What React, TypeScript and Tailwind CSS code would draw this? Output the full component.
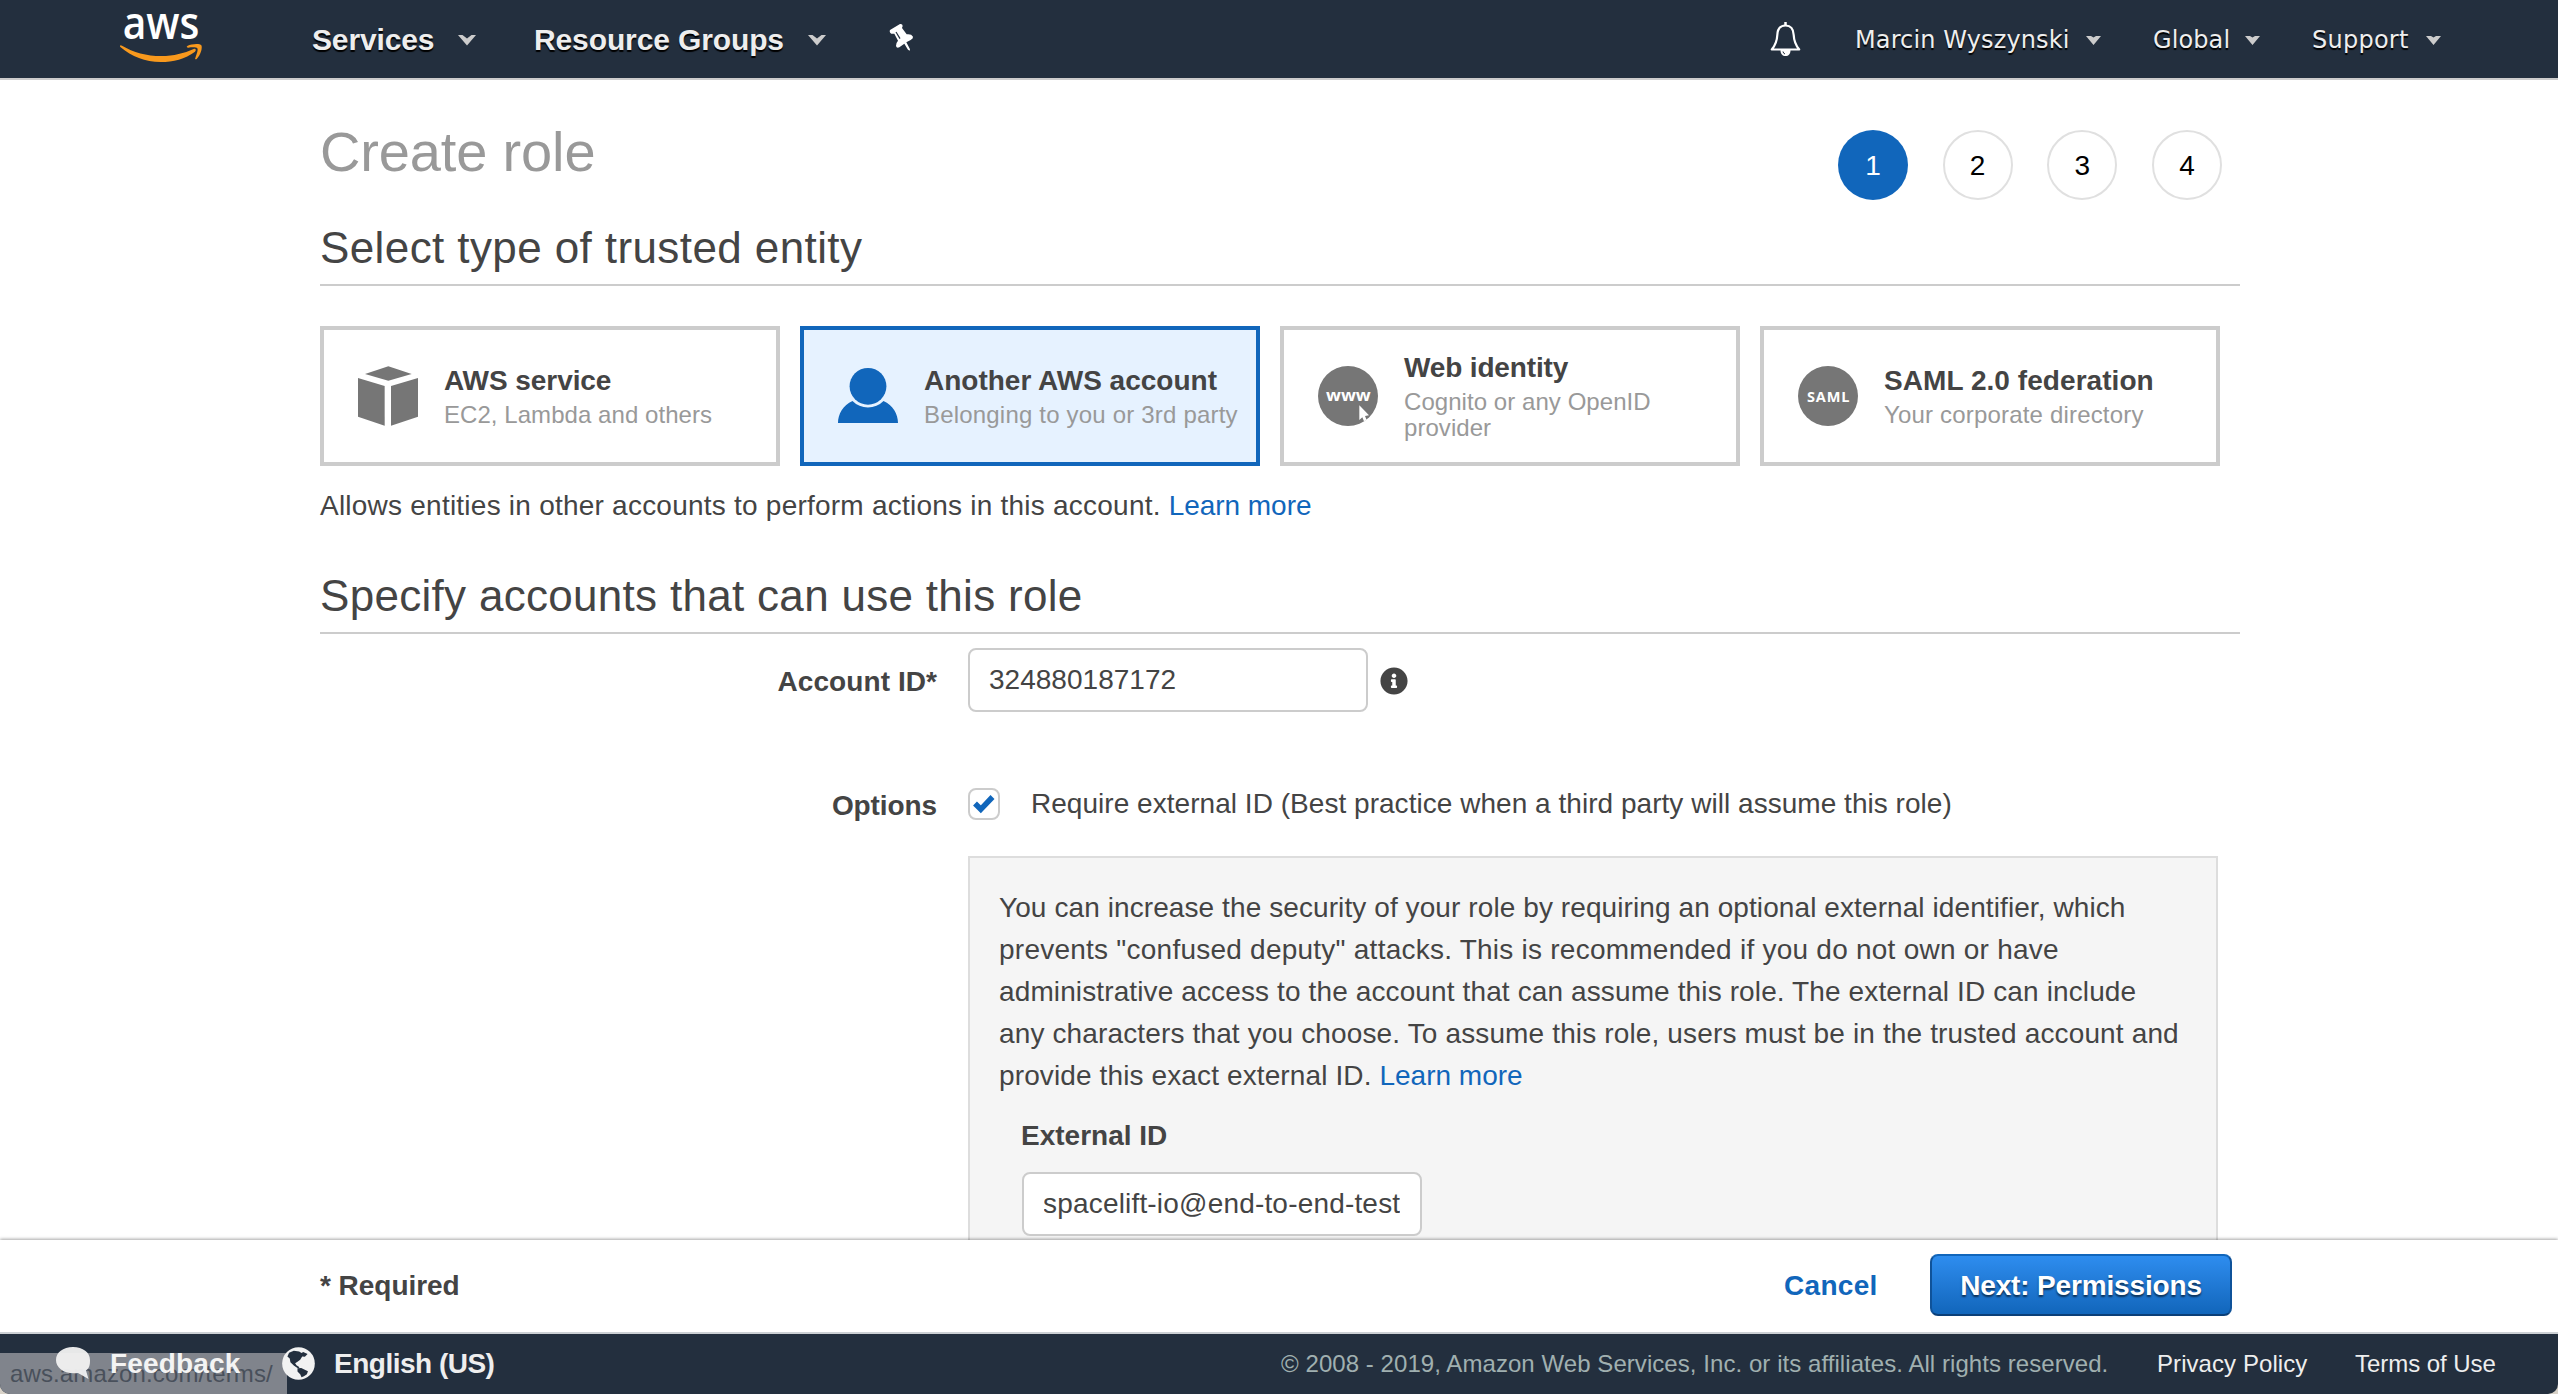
import type { ReactNode } from 'react';
import { FaInfoCircle } from 'react-icons/fa';

function AwsLogo() {
  return (
    <svg className="ml-[100px] h-[78px] w-[120px] shrink-0" viewBox="0 0 360 234">
      <text
        x="68"
        y="116"
        fill="#fff"
        fontFamily='"Open Sans", sans-serif'
        fontWeight="600"
        fontSize="134"
        textLength="230"
        lengthAdjust="spacingAndGlyphs"
      >
        aws
      </text>
      <path
        fill="#f8991d"
        d="M60 137Q62 134 66 137C100 157 140 168 184 168C222 168 252 160 281 147C287 145 290 151 285 155C255 177 220 186 182 186C135 186 95 170 62 142Q59 139 60 137Z"
      />
      <path
        fill="#f8991d"
        d="M262 138C275 131 300 130 304 136C308 143 302 166 290 177C287 179 284 177 286 174C290 163 295 149 292 145C289 141 275 142 265 143C260 143 259 140 262 138Z"
      />
    </svg>
  );
}

function BigCaret({ className }: { className: string }) {
  return (
    <svg className={`h-[11px] w-[18px] shrink-0 ${className}`} viewBox="0 0 18 11">
      <path fill="#ccc" d="M0 0H4.5L9 3.6L13.500 0H18L9 10.500Z" />
    </svg>
  );
}

function SmallCaret({ className }: { className: string }) {
  return (
    <svg className={`h-[9px] w-[15px] shrink-0 ${className}`} viewBox="0 0 15 9">
      <path fill="#ccc" d="M0 0H5L7.500 1.500L10 0H15L7.500 9Z" />
    </svg>
  );
}

function PinIcon() {
  return (
    <svg className="-mt-1 ml-[62px] h-[32px] w-[26px] shrink-0" viewBox="54 68 78 96">
      <path
        fill="#fff"
        d="M60 92L90 74Q98 73 98 80L96 86L110 105Q124 103 129 112Q130 118 122 122L109 129L120 150L119 154L114 151L103 133L88 144Q80 148 78 140Q78 130 84 124L73 103L64 103Q57 99 60 92Z"
      />
      <path stroke="#232f3e" strokeWidth="3.500" d="M78 98L90 118" />
    </svg>
  );
}

function BellIcon() {
  return (
    <svg className="-mt-0.5 h-[34px] w-[31px] shrink-0" viewBox="0 0 31 34">
      <path
        fill="none"
        stroke="#fff"
        strokeWidth="2.200"
        strokeLinejoin="round"
        d="M15.500 3.500C9 3.500 7.500 8 7.300 13C7 20 5.500 23 1.800 27.500H29.200C25.500 23 24 20 23.700 13C23.500 8 22 3.500 15.500 3.500Z"
      />
      <path stroke="#fff" strokeWidth="2.500" d="M15.500 0V4" />
      <path fill="#fff" d="M10.500 28H20.500C20.500 32 18.500 34 15.500 34C12.500 34 10.500 32 10.500 28Z" />
      <path fill="none" stroke="#232f3e" strokeWidth="1" d="M13 29.500Q13.300 31.500 15 32" />
    </svg>
  );
}

function CubeIcon() {
  return (
    <svg className="size-[60px]" viewBox="54 78 180 180" fill="#767676">
      <path d="M75 102L145 79L215 102L145 122Z" />
      <path d="M54 114L134 138V257L54 230Z" />
      <path d="M153 138L234 114V230L153 257Z" />
    </svg>
  );
}

function UserIcon() {
  return (
    <svg className="size-[60px]" viewBox="0 0 60 60" fill="#1166bb">
      <circle cx="30" cy="20.300" r="18.400" />
      <path d="M0 57C0 48 5 39 14.500 34.900A21.500 21.500 0 0 0 45.500 34.900C55 39 60 48 60 57Z" />
    </svg>
  );
}

function WebIcon() {
  return (
    <svg className="size-[60px]" viewBox="54 48 180 180">
      <circle cx="144" cy="138" r="90" fill="#767676" />
      <text
        x="78"
        y="153"
        fill="#fff"
        fontFamily='"Open Sans", sans-serif'
        fontWeight="700"
        fontSize="49"
        textLength="134"
        lengthAdjust="spacingAndGlyphs"
      >
        www
      </text>
      <path fill="#fff" d="M178 166V210L187 202L192 214L200 210L195 198L207 196Z" />
    </svg>
  );
}

function SamlIcon() {
  return (
    <svg className="size-[60px]" viewBox="0 0 60 60">
      <circle cx="30" cy="30" r="30" fill="#767676" />
      <text
        x="9"
        y="35.800"
        fill="#fff"
        fontFamily='"Open Sans", sans-serif'
        fontWeight="700"
        fontSize="14.500"
        textLength="42.500"
        lengthAdjust="spacing"
      >
        SAML
      </text>
    </svg>
  );
}

function BubbleIcon() {
  return (
    <svg className="h-[33px] w-[34px] shrink-0" viewBox="0 0 34 33">
      <path fill="#f2f2f2" d="M17 0C27 0 34 5.500 34 13C34 18 33.500 21 30 23.500L32.500 32L22 26C8 27.500 0 21 0 13C0 5.500 7 0 17 0Z" />
    </svg>
  );
}

function GlobeIcon() {
  return (
    <svg className="size-[33px] shrink-0" viewBox="845 383 98 98">
      <circle cx="894" cy="432" r="48.500" fill="#f2f2f2" />
      <path
        fill="#232f3e"
        d="M861 411L866 400L880 394L896 396L903 401L908 398L921 404L913 412L905 411L899 421L891 427L884 431L888 437L897 443L893 447L880 438L870 428L868 417Z"
      />
      <path fill="#232f3e" d="M891 446L902 445L922 455L919 464L910 470L903 473L899 464L891 456Z" />
    </svg>
  );
}

function SectionTitle({ children, className }: { children: ReactNode; className: string }) {
  return (
    <h2 className={`h-16 border-b-2 border-[#ccc] text-[44px] leading-[52px] ${className}`}>
      {children}
    </h2>
  );
}

type CardProps = {
  icon: ReactNode;
  title: string;
  titleClass: string;
  text: string;
  textClass: string;
  selected?: boolean;
};

function EntityCard({ icon, title, titleClass, text, textClass, selected }: CardProps) {
  return (
    <div
      className={`flex h-[140px] items-center border-4 pl-[34px] ${
        selected ? 'border-[#1166bb] bg-[#e6f2ff]' : 'border-[#ccc] bg-white'
      }`}
    >
      <div className="shrink-0">{icon}</div>
      <div className="ml-[26px]">
        <div className={`text-[28px] leading-[34px] font-bold ${titleClass}`}>{title}</div>
        <div className={`mt-1 text-2xl leading-[26px] text-[#999] ${textClass}`}>{text}</div>
      </div>
    </div>
  );
}

function Steps() {
  return (
    <ol className="mt-3 mr-[18px] flex gap-[34.700px] text-[28px]">
      {[1, 2, 3, 4].map((n) => (
        <li
          key={n}
          className={`flex size-[70px] items-center justify-center rounded-full pt-0.5 ${
            n === 1 ? 'bg-[#1166bb] text-white' : 'border-2 border-[#e0e0e0] text-black'
          }`}
        >
          {n}
        </li>
      ))}
    </ol>
  );
}

function Header() {
  return (
    <header className="flex h-20 shrink-0 items-center border-b-2 border-[#ccc] bg-[#232f3e] text-[#eee]">
      <AwsLogo />
      <nav className="flex flex-1 items-center pt-0.5 text-[30px] leading-10 font-bold [text-shadow:0_2px_1px_#000]">
        <span className="ml-[92px] w-[122px] whitespace-nowrap tracking-[-0.150px]">Services</span>
        <BigCaret className="ml-6" />
        <span className="ml-[58px] w-[249px] whitespace-nowrap tracking-[-0.120px]">Resource Groups</span>
        <BigCaret className="ml-[25px]" />
        <PinIcon />
      </nav>
      <div className="flex w-[788px] items-center pt-0.5 font-['DejaVu_Sans',sans-serif] text-2xl [text-shadow:0_2px_1px_#000]">
        <BellIcon />
        <span className="ml-[54px] w-[214px] whitespace-nowrap tracking-[0.120px]">Marcin Wyszynski</span>
        <SmallCaret className="ml-[17px]" />
        <span className="ml-[52px] w-[76px] whitespace-nowrap tracking-[0.100px]">Global</span>
        <SmallCaret className="ml-4" />
        <span className="ml-[52px] w-[97px] whitespace-nowrap tracking-[0.250px]">Support</span>
        <SmallCaret className="ml-[17px]" />
      </div>
    </header>
  );
}

function ExternalIdPanel() {
  return (
    <div className="mt-8 ml-[648px] h-[420px] w-[1250px] border-2 border-[#ddd] bg-[#f5f5f5] pt-[29px] pl-[29px]">
      <p className="text-[28px] leading-[42px] whitespace-nowrap">
        <span className="block tracking-[0.090px]">
          You can increase the security of your role by requiring an optional external identifier, which
        </span>
        <span className="block tracking-[0.240px]">
          prevents "confused deputy" attacks. This is recommended if you do not own or have
        </span>
        <span className="block tracking-[0.120px]">
          administrative access to the account that can assume this role. The external ID can include
        </span>
        <span className="block tracking-[0.140px]">
          any characters that you choose. To assume this role, users must be in the trusted account and
        </span>
        <span className="block tracking-[0.120px]">
          provide this exact external ID. <a className="tracking-normal text-[#1166bb]">Learn more</a>
        </span>
      </p>
      <div className="ml-[23px]">
        <div className="mt-[18px] -ml-px text-[28px] leading-[42px] font-bold">External ID</div>
        <div className="mt-[15px] flex h-16 w-[400px] items-center rounded-lg border-2 border-[#ccc] bg-white px-5">
          <div className="flex-1 overflow-hidden text-[28px] leading-10 whitespace-nowrap tracking-[0.183px]">
            <span className="-ml-px">spacelift-io@end-to-end-test</span>
          </div>
        </div>
      </div>
    </div>
  );
}

function Main() {
  return (
    <main className="h-[1160px] shrink-0 overflow-hidden bg-white pt-[38px] pl-[320px] text-[#444]">
      <div className="w-[1920px]">
        <div className="flex h-[104px] items-start justify-between">
          <h1 className="text-[56px] leading-[68px] tracking-[-0.150px] text-[#999]">Create role</h1>
          <Steps />
        </div>
        <SectionTitle className="tracking-[0.400px]">Select type of trusted entity</SectionTitle>
        <div className="mt-10 grid grid-cols-[460px_460px_460px_460px] gap-5">
          <EntityCard
            icon={<CubeIcon />}
            title="AWS service"
            titleClass="tracking-[-0.067px]"
            text="EC2, Lambda and others"
            textClass="tracking-[0.055px]"
          />
          <EntityCard
            icon={<UserIcon />}
            title="Another AWS account"
            titleClass="tracking-[0px]"
            text="Belonging to you or 3rd party"
            textClass="tracking-[0.190px]"
            selected
          />
          <EntityCard
            icon={<WebIcon />}
            title="Web identity"
            titleClass="tracking-[-0.150px]"
            text="Cognito or any OpenID provider"
            textClass="tracking-[0.058px]"
          />
          <EntityCard
            icon={<SamlIcon />}
            title="SAML 2.0 federation"
            titleClass="tracking-[0.058px]"
            text="Your corporate directory"
            textClass="tracking-[0.180px]"
          />
        </div>
        <p className="mt-5 text-[28px] leading-10 tracking-[0.230px]">
          Allows entities in other accounts to perform actions in this account.{' '}
          <a className="tracking-[-0.050px] text-[#1166bb]">Learn more</a>
        </p>
        <SectionTitle className="mt-11 tracking-[0.300px]">Specify accounts that can use this role</SectionTitle>

        <div className="mt-3.5 flex h-16 items-center text-[28px]">
          <label className="w-[617px] pt-[3px] text-right font-bold tracking-[0.072px]">Account ID*</label>
          <div className="ml-[31px] flex h-16 w-[400px] items-center rounded-lg border-2 border-[#ccc] bg-white px-[19px] tracking-[0.020px]">
            324880187172
          </div>
          <FaInfoCircle className="mt-0.5 ml-3 size-7 text-[#444]" />
        </div>

        <div className="mt-[72px] flex h-10 items-center text-[28px]">
          <label className="w-[617px] pt-[3px] text-right font-bold tracking-[-0.100px]">Options</label>
          <span className="ml-[31px] flex size-8 items-center justify-center rounded-lg border-2 border-[#ccc] bg-white">
            <svg className="size-7" viewBox="0 0 28 28">
              <path
                fill="none"
                stroke="#1166bb"
                strokeWidth="5.500"
                d="M5 13.500L10.800 19.300L22.500 7"
              />
            </svg>
          </span>
          <span className="ml-[31px] tracking-[0.035px]">
            Require external ID (Best practice when a third party will assume this role)
          </span>
        </div>
        <ExternalIdPanel />
      </div>
    </main>
  );
}

function ActionBar() {
  return (
    <div className="relative flex h-[94px] shrink-0 items-center border-b-2 border-[#ccd0d4] bg-white pl-[320px] text-[28px] font-bold shadow-[0_-1px_3px_rgba(0,0,0,0.350)]">
      <span className="w-[1464px] tracking-[-0.036px] text-[#444]">* Required</span>
      <a className="w-[146px] tracking-[0.300px] text-[#1166bb]">Cancel</a>
      <button className="-mt-0.5 h-[62px] w-[302px] rounded-lg border-2 border-[#0f5299] border-t-[#1166bb] border-b-[#0a3f78] bg-linear-to-b from-[#2e8def] to-[#1166bb] pt-px tracking-[-0.159px] text-white [text-shadow:0_2px_2px_rgba(0,0,0,0.600)]">
        Next: Permissions
      </button>
    </div>
  );
}

function Footer() {
  return (
    <footer className="relative flex h-[60px] shrink-0 items-center rounded-b-[10px] bg-[#232f3e] text-2xl whitespace-nowrap text-[#eee]">
      <div className="absolute bottom-0 left-0 h-[41px] w-[287px] rounded-bl-[10px] bg-[#80848c] pl-2.5 leading-[41px] tracking-[0.130px] text-[#49505b]">
        aws.amazon.com/terms/
      </div>
      <div className="relative flex flex-1 items-center text-[28px] font-bold">
        <span className="ml-14 opacity-95">
          <BubbleIcon />
        </span>
        <span className="ml-5 w-[172px] tracking-[0.157px] text-[#f4f4f4]">Feedback</span>
        <GlobeIcon />
        <span className="ml-[19px] tracking-[-0.500px]">English (US)</span>
      </div>
      <span className="w-[876px] tracking-[0.060px] text-[#a0b0b0]">
        © 2008 - 2019, Amazon Web Services, Inc. or its affiliates. All rights reserved.
      </span>
      <a className="w-[198px] tracking-[0.072px]">Privacy Policy</a>
      <a className="w-[203px] tracking-[-0.047px]">Terms of Use</a>
    </footer>
  );
}

export default function App() {
  return (
    <div className="flex h-[1394px] w-[2558px] flex-col overflow-hidden bg-[#d8d2c8] font-['Liberation_Sans',Arial,sans-serif]">
      <Header />
      <Main />
      <ActionBar />
      <Footer />
    </div>
  );
}
